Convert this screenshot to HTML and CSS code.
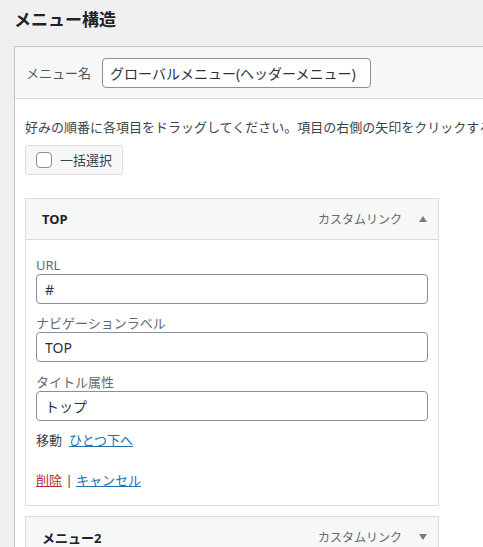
FILE: index.html
```html
<!DOCTYPE html>
<html lang="ja">
<head>
<meta charset="utf-8">
<title>メニュー構造</title>
<link rel="stylesheet" href="styles.css">
</head>
<body>
<div class="page">
  <h2 class="title">メニュー構造</h2>
  <div class="panel">
    <div class="panel-head">
      <label class="name-label" for="menu-name">メニュー名</label>
      <input class="text-input name-input" id="menu-name" type="text" value="グローバルメニュー(ヘッダーメニュー)">
    </div>
    <div class="panel-body">
      <p class="desc">好みの順番に各項目をドラッグしてください。項目の右側の矢印をクリックすると、追加の設定オプションが表示されます。</p>
      <label class="bulk-btn"><span class="checkbox"></span><span>一括選択</span></label>

      <div class="item">
        <div class="item-head">
          <span class="item-title">TOP</span>
          <span class="item-type">カスタムリンク</span>
          <svg class="item-arrow" width="8" height="6" viewBox="0 0 8 6"><path d="M0 6 L4 0 L8 6 Z" fill="#787c82"/></svg>
        </div>
        <div class="item-body">
          <div class="field">
            <span class="field-label">URL</span>
            <input class="text-input" type="text" value="#">
          </div>
          <div class="field">
            <span class="field-label">ナビゲーションラベル</span>
            <input class="text-input" type="text" value="TOP">
          </div>
          <div class="field">
            <span class="field-label">タイトル属性</span>
            <input class="text-input" type="text" value="トップ">
          </div>
          <div class="move-row">移動<a class="link move-link" href="#">ひとつ下へ</a></div>
          <div class="actions"><a class="link delete" href="#">削除</a> | <a class="link" href="#">キャンセル</a></div>
        </div>
      </div>

      <div class="item">
        <div class="item-head">
          <span class="item-title">メニュー2</span>
          <span class="item-type">カスタムリンク</span>
          <svg class="item-arrow" width="8" height="6" viewBox="0 0 8 6"><path d="M0 0 L8 0 L4 6 Z" fill="#787c82"/></svg>
        </div>
      </div>
    </div>
  </div>
</div>
</body>
</html>
```
FILE: styles.css
```css
html, body {
  margin: 0;
  padding: 0;
  overflow: hidden;
}
body {
  background: #f0f0f1;
  color: #3c434a;
  font-family: "Noto Sans", "Noto Sans CJK JP", sans-serif;
  font-size: 13px;
  width: 483px;
  height: 547px;
}
.page {
  padding-left: 14px;
}
.title {
  margin: 8px 0 14px;
  font-size: 17px;
  line-height: 24px;
  font-weight: 700;
  color: #1d2327;
}
.panel {
  width: 700px;
  border: 1px solid #c3c4c7;
  background: #fff;
  height: 600px;
}
.panel-head {
  display: flex;
  align-items: center;
  gap: 11px;
  height: 51px;
  padding-left: 11px;
  background: #f6f7f7;
  border-bottom: 1px solid #dcdcde;
  box-sizing: content-box;
}
.name-label {
  font-size: 13px;
  color: #50575e;
  line-height: 20px;
}
.text-input {
  box-sizing: border-box;
  height: 30px;
  border: 1px solid #8c8f94;
  border-radius: 4px;
  background: #fff;
  padding: 0 8px;
  font-family: "Noto Sans", "Noto Sans CJK JP", sans-serif;
  font-size: 14px;
  color: #2c3338;
  margin: 0;
  outline: none;
}
.name-input {
  width: 269px;
  font-size: 14px;
  padding: 0 7px;
}
.panel-body {
  padding: 18px 10px 0;
}
.desc {
  margin: 0;
  line-height: 20px;
  white-space: nowrap;
  color: #3c434a;
}
.bulk-btn {
  display: flex;
  width: fit-content;
  align-items: center;
  gap: 8px;
  box-sizing: border-box;
  height: 30px;
  margin-top: 8px;
  padding: 0 10px;
  background: #f6f7f7;
  border: 1px solid #dcdcde;
  border-radius: 3px;
  line-height: 20px;
  color: #3c434a;
}
.checkbox {
  width: 16px;
  height: 16px;
  box-sizing: border-box;
  border: 1px solid #8c8f94;
  border-radius: 4px;
  background: #fff;
}
.item {
  width: 414px;
  box-sizing: border-box;
  margin-top: 23px;
}
.item + .item {
  margin-top: 10px;
}
.item-head {
  display: flex;
  align-items: center;
  height: 42px;
  box-sizing: border-box;
  padding: 0 11px 0 16px;
  background: #f6f7f7;
  border: 1px solid #dcdcde;
}
.item-title {
  flex: 1;
  font-weight: 700;
  color: #1d2327;
  font-size: 13px;
}
.item-type {
  font-size: 12px;
  color: #646970;
}
.item-arrow {
  margin-left: 17px;
}
.item-body {
  border: 1px solid #dcdcde;
  border-top: none;
  padding: 16px 10px 15px;
}
.field {
  display: flex;
  flex-direction: column;
}
.field + .field {
  margin-top: 10px;
}
.field + .field + .field {
  margin-top: 11px;
}
.field-label {
  line-height: 18px;
  color: #646970;
}
.field .text-input {
  width: 100%;
}
.move-row {
  margin-top: 9px;
  line-height: 20px;
  color: #3c434a;
}
.move-link {
  margin-left: 7px;
}
.actions {
  margin-top: 20px;
  line-height: 20px;
  color: #3c434a;
}
.link {
  color: #2271b1;
  text-decoration: underline;
}
.delete {
  color: #b32d2e;
}
```
